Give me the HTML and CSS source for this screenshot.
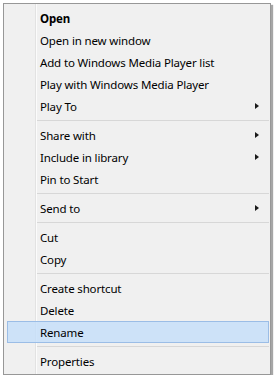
FILE: index.html
```html
<!DOCTYPE html>
<html>
<head>
<meta charset="utf-8">
<link rel="stylesheet" href="styles.css">
</head>
<body>
<div class="menu">
  <div class="item bold"><span class="label">Open</span></div>
  <div class="item"><span class="label">Open in new window</span></div>
  <div class="item"><span class="label">Add to Windows Media Player list</span></div>
  <div class="item"><span class="label">Play with Windows Media Player</span></div>
  <div class="item"><span class="label">Play To</span><span class="arrow"></span></div>
  <div class="sep"></div>
  <div class="item"><span class="label">Share with</span><span class="arrow"></span></div>
  <div class="item"><span class="label">Include in library</span><span class="arrow"></span></div>
  <div class="item"><span class="label">Pin to Start</span></div>
  <div class="sep"></div>
  <div class="item"><span class="label">Send to</span><span class="arrow"></span></div>
  <div class="sep"></div>
  <div class="item"><span class="label">Cut</span></div>
  <div class="item"><span class="label">Copy</span></div>
  <div class="sep"></div>
  <div class="item"><span class="label">Create shortcut</span></div>
  <div class="item"><span class="label">Delete</span></div>
  <div class="item hover"><span class="label">Rename</span></div>
  <div class="sep"></div>
  <div class="item"><span class="label">Properties</span></div>
</div>
</body>
</html>
```
FILE: styles.css
```css
html, body {
  margin: 0;
  padding: 0;
  background: #ffffff;
}
body {
  padding: 3px 0 0 3px;
  font-family: "Noto Sans", "Open Sans", sans-serif;
  font-size: 11.5px;
  letter-spacing: -0.15px;
  color: #000;
}
.menu {
  position: relative;
  width: 262px;
  box-sizing: content-box;
  background: #f0f0f0;
  border: 1px solid #979797;
  padding: 3px 1px 2px 3px;
  box-shadow: 2px 2px 1px rgba(0, 0, 0, 0.35);
}
.menu::before {
  content: "";
  position: absolute;
  left: 31px;
  top: 0;
  bottom: 0;
  width: 1px;
  background: #e2e2e2;
  border-right: 1px solid #fbfbfb;
}
.item {
  position: relative;
  display: flex;
  align-items: center;
  height: 22px;
  box-sizing: border-box;
  padding-left: 32px;
  padding-right: 9px;
  border: 1px solid transparent;
}
.item.bold .label {
  font-weight: bold;
}
.item.hover {
  background: rgba(196, 222, 250, 0.8);
  border-color: #9bbde6;
}
.label {
  flex: 1;
  white-space: nowrap;
}
.arrow {
  width: 0;
  height: 0;
  border-top: 3.5px solid transparent;
  border-bottom: 3.5px solid transparent;
  border-left: 4px solid #1a1a1a;
}
.sep {
  height: 7px;
  display: flex;
  align-items: center;
  padding-left: 28px;
  padding-right: 0;
}
.sep::after {
  content: "";
  flex: 1;
  height: 1px;
  background: #d7d7d7;
}
```
